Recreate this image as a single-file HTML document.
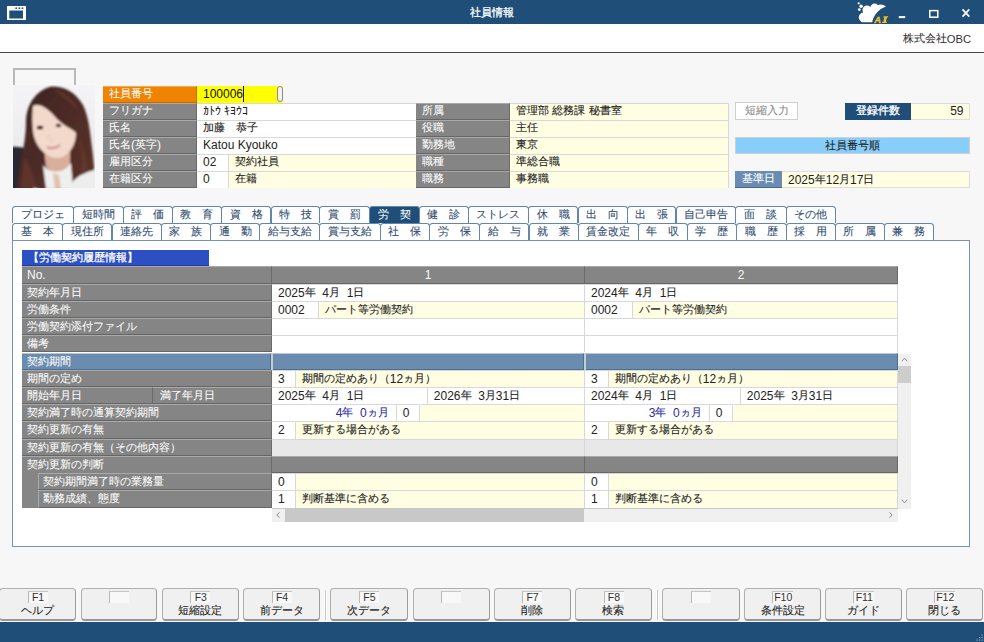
<!DOCTYPE html><html><head><meta charset="utf-8"><style>
*{box-sizing:border-box;margin:0;padding:0}
html,body{width:984px;height:642px;overflow:hidden}
body{position:relative;background:#f7f7f7;font-family:"Liberation Sans",sans-serif;font-size:12px;color:#222}
div{position:absolute;white-space:pre}
.lb{background:#858585;border-top:1px solid #a9a9a9;border-right:1px solid #6a6a6a;border-bottom:1.5px solid #666;color:#fafafa;padding-left:6px;line-height:17px}
.v{background:#fff;border-top:1px solid #d8d8d8;line-height:16.4px;padding-left:6px;color:#222}
.y{background:#fffee3}
.tab{background:#fff;border:1px solid #6386ad;border-bottom:none;border-radius:3.5px 3.5px 0 0;color:#2f4d72;font-size:11px;text-align:center;line-height:16.5px}
.j{font-size:11px;vertical-align:1.5px;line-height:1;-webkit-text-stroke:0.1px currentColor}
.b .j{-webkit-text-stroke:0.3px currentColor}
.fk{background:#f0f0f0;border:1px solid #b0b0b0;border-right-color:#9c9c9c;border-bottom:2px solid #979797;border-radius:4px}
</style></head><body>
<div style="left:0px;top:0px;width:984px;height:24px;background:#1f4e79"></div>
<svg style="position:absolute;left:0;top:0" width="984" height="24"><path fill="#fff" fill-rule="evenodd" d="M7,6H26V20H7Z M9.3,10.4V18.4H23V10.4Z"/><circle cx="16.2" cy="8.2" r="0.9" fill="#1f4e79"/><circle cx="19.4" cy="8.2" r="0.9" fill="#1f4e79"/><circle cx="22.5" cy="8.2" r="0.9" fill="#1f4e79"/><circle cx="858.7" cy="3.3" r="1.1" fill="#fff"/><circle cx="861.1" cy="6.2" r="1.7" fill="#fff"/><circle cx="859.3" cy="9.6" r="1.4" fill="#fff"/><g fill="#fff"><circle cx="863.6" cy="17.3" r="4.8"/><circle cx="867" cy="9.9" r="4.5"/><circle cx="874.6" cy="8" r="4.4"/><ellipse cx="881.6" cy="7.2" rx="4.4" ry="2.5" transform="rotate(12 881.6 7.2)"/><path d="M860,20L864,11L872,7L884,7.5L880,14L873,22.2H862Z"/></g><circle cx="892" cy="26" r="20.2" fill="#1f4e79"/><text x="874.2" y="23" font-family="Liberation Sans" font-weight="bold" font-style="italic" font-size="9.3" fill="#f2c01e" stroke="#f2c01e" stroke-width="0.35">A</text><path fill="#f2c01e" d="M883.6,16.3H888.2L887.9,17.6H886.9L885.9,21.7H886.9L886.6,23H882L882.3,21.7H883.3L884.3,17.6H883.3Z"/><rect x="898.8" y="16.1" width="6.4" height="2" fill="#fff"/><rect x="929.8" y="10.6" width="8" height="6.6" fill="none" stroke="#fff" stroke-width="1.5"/><path d="M962.5,9.3L969.3,16.6M969.3,9.3L962.5,16.6" stroke="#fff" stroke-width="1.7"/></svg>
<div class="b" style="left:0px;top:0px;width:984px;height:24px;color:#fff;text-align:center;line-height:26.8px;font-size:12px"><span class="j">社員情報</span></div>
<div style="left:0px;top:24px;width:984px;height:28px;background:#fff"></div>
<div style="left:880px;top:24px;width:91px;height:28px;text-align:right;line-height:31px;font-size:12px;color:#333"><span class="j">株式会社</span><span style="font-size:11.2px">OBC</span></div>
<div style="left:0px;top:52px;width:984px;height:1px;background:#4a4a4a"></div>
<div style="left:13px;top:68px;width:63px;height:18px;border:2px solid #b8b8b8;border-bottom:none"></div>
<svg style="position:absolute;left:13px;top:85px" width="82" height="103" viewBox="0 0 82 103"><defs><linearGradient id="bg" x1="0" y1="0" x2="0" y2="1"><stop offset="0" stop-color="#f4f4f6"/><stop offset="1" stop-color="#e6e6ea"/></linearGradient><linearGradient id="hair" x1="0" y1="0" x2="1" y2="1"><stop offset="0" stop-color="#3a2421"/><stop offset="0.5" stop-color="#4e2c26"/><stop offset="1" stop-color="#5a3229"/></linearGradient><filter id="bl" x="-10%" y="-10%" width="120%" height="120%"><feGaussianBlur stdDeviation="0.9"/></filter></defs><rect width="82" height="103" fill="url(#bg)"/><g filter="url(#bl)"><path fill="#2a2730" d="M-3,62C4,61 10,62 16,65L20,106H-3Z"/><path fill="url(#hair)" d="M38,1.5C50,1 62,6 70,20C75,30 77,45 78,55C80,70 82,85 82,106H28C24,100 10,104 4,106C5,95 7,80 9,68C12,58 13,45 13,35C14,20 22,6 38,1.5Z"/><path fill="#6a3a30" opacity="0.6" d="M12,72C17,82 20,92 24,103H8C9,92 10,82 12,72Z M66,52C72,64 76,80 74,100H67C69,82 69,68 66,52Z M40,4C52,6 60,14 66,26C58,18 50,12 40,4Z"/><path fill="#d9ae9a" d="M31,64C36,71 50,73 57,66L57,82C52,90 40,90 33,82Z"/><path fill="#efefef" d="M30,80C36,88 50,90 58,78L60,104H33Z"/><path fill="#e4c0ae" d="M40,88L46,90L48,104H42Z"/><path fill="#ededed" d="M60,96C66,90 74,87 84,84V106H56Z"/><path fill="#f3d9cb" d="M20,21C26,18 34,22 44,34C52,42 60,44 63,48C63,58 58,68 50,72C44,74 38,73 33,69C26,64 21,56 20,46C19,36 19,28 20,21Z"/></g><g filter="url(#bl)"><ellipse cx="27" cy="42.5" rx="3" ry="1.6" fill="#2e2226"/><ellipse cx="45.5" cy="40.5" rx="2.6" ry="1.4" fill="#4a3230"/><path d="M35,50C37,54 38,56 40,56" stroke="#dcb6a6" stroke-width="1" fill="none"/><path d="M34,62C38,64 44,63 47,60" stroke="#d49590" stroke-width="2.2" fill="none"/></g></svg>
<div class="lb" style="left:103px;top:85.5px;width:94px;height:17.13px;background:#f08300;border-top-color:#f5a850;border-right-color:#c86a00;border-bottom-color:#c86a00;line-height:15px"><span class="j">社員番号</span></div>
<div style="left:197px;top:85.5px;width:85.5px;height:17.13px;background:#ffff00;padding-left:6px;line-height:16.5px;color:#111">100006<span style="display:inline-block;width:1px;height:15.5px;background:#1010c0;vertical-align:-4px"></span></div>
<div style="left:277.3px;top:85.8px;width:5.5px;height:16.529999999999998px;background:#f4f4f4;border:1px solid #8a8a8a;border-radius:3px"></div>
<div class="lb" style="left:103px;top:102.63px;width:94px;height:17.13px;line-height:15px"><span class="j">フリガナ</span></div>
<div class="v" style="left:197px;top:102.63px;width:219px;height:17.13px;line-height:14.4px">ｶﾄｳ ｷﾖｳｺ</div>
<div class="lb" style="left:103px;top:119.76px;width:94px;height:17.13px;line-height:15px"><span class="j">氏名</span></div>
<div class="v" style="left:197px;top:119.76px;width:219px;height:17.13px;line-height:14.4px"><span class="j">加藤　恭子</span></div>
<div class="lb" style="left:103px;top:136.89px;width:94px;height:17.13px;line-height:15px"><span class="j">氏名</span>(<span class="j">英字</span>)</div>
<div class="v" style="left:197px;top:136.89px;width:219px;height:17.13px;line-height:14.4px">Katou Kyouko</div>
<div class="lb" style="left:103px;top:154.02px;width:94px;height:17.13px;line-height:15px"><span class="j">雇用区分</span></div>
<div class="v" style="left:197px;top:154.02px;width:31px;height:17.13px;line-height:14.4px">02</div>
<div class="v y" style="left:228px;top:154.02px;width:188px;height:17.13px;border-left:1px solid #d8d8d8;line-height:14.4px"><span class="j">契約社員</span></div>
<div class="lb" style="left:103px;top:171.15px;width:94px;height:17.13px;line-height:15px"><span class="j">在籍区分</span></div>
<div class="v" style="left:197px;top:171.15px;width:31px;height:17.13px;line-height:14.4px">0</div>
<div class="v y" style="left:228px;top:171.15px;width:188px;height:17.13px;border-left:1px solid #d8d8d8;line-height:14.4px"><span class="j">在籍</span></div>
<div class="lb" style="left:416px;top:102.63px;width:94px;height:17.13px;line-height:15px"><span class="j">所属</span></div>
<div class="v y" style="left:510px;top:102.63px;width:219px;height:17.13px;border-right:1px solid #d8d8d8;line-height:14.4px"><span class="j">管理部</span> <span class="j">総務課</span> <span class="j">秘書室</span></div>
<div class="lb" style="left:416px;top:119.76px;width:94px;height:17.13px;line-height:15px"><span class="j">役職</span></div>
<div class="v y" style="left:510px;top:119.76px;width:219px;height:17.13px;border-right:1px solid #d8d8d8;line-height:14.4px"><span class="j">主任</span></div>
<div class="lb" style="left:416px;top:136.89px;width:94px;height:17.13px;line-height:15px"><span class="j">勤務地</span></div>
<div class="v y" style="left:510px;top:136.89px;width:219px;height:17.13px;border-right:1px solid #d8d8d8;line-height:14.4px"><span class="j">東京</span></div>
<div class="lb" style="left:416px;top:154.02px;width:94px;height:17.13px;line-height:15px"><span class="j">職種</span></div>
<div class="v y" style="left:510px;top:154.02px;width:219px;height:17.13px;border-right:1px solid #d8d8d8;line-height:14.4px"><span class="j">準総合職</span></div>
<div class="lb" style="left:416px;top:171.15px;width:94px;height:17.13px;line-height:15px"><span class="j">職務</span></div>
<div class="v y" style="left:510px;top:171.15px;width:219px;height:17.13px;border-right:1px solid #d8d8d8;line-height:14.4px"><span class="j">事務職</span></div>
<div style="left:735px;top:102px;width:63px;height:18px;background:#fff;border:1px solid #cfcfcf;color:#8a8a8a;text-align:center;line-height:16px"><span class="j">短縮入力</span></div>
<div class="b" style="left:845px;top:102.5px;width:66px;height:17px;background:#1f4e79;color:#fff;text-align:center;line-height:17px"><span class="j">登録件数</span></div>
<div style="left:911px;top:102.5px;width:59px;height:17px;background:#fffee3;border:1px solid #dcdcdc;border-left:none;text-align:right;padding-right:5.5px;line-height:15px">59</div>
<div style="left:735px;top:137px;width:235px;height:17.3px;background:#87cefa;border:1px solid #d0d0d0;text-align:center;line-height:16px;color:#222"><span class="j">社員番号順</span></div>
<div style="left:735px;top:171.2px;width:47px;height:17px;background:#6a8cb2;border-bottom:1.5px solid #48698c;color:#fff;text-align:center;line-height:16px;padding-right:1px"><span class="j">基準日</span></div>
<div style="left:782px;top:171.2px;width:188px;height:17px;background:#fffee3;border:1px solid #dcdcdc;border-left:none;padding-left:6px;line-height:16px">2025<span class="j">年</span>12<span class="j">月</span>17<span class="j">日</span></div>
<div class="tab" style="left:12.3px;top:206px;width:61.7px;height:17px;"><span class="j">プロジェ</span></div>
<div class="tab" style="left:73px;top:206px;width:50.5px;height:17px;"><span class="j">短時間</span></div>
<div class="tab" style="left:122.5px;top:206px;width:50.4px;height:17px;"><span class="j">評　価</span></div>
<div class="tab" style="left:171.9px;top:206px;width:50.2px;height:17px;"><span class="j">教　育</span></div>
<div class="tab" style="left:221.1px;top:206px;width:50.4px;height:17px;"><span class="j">資　格</span></div>
<div class="tab" style="left:270.5px;top:206px;width:49.8px;height:17px;"><span class="j">特　技</span></div>
<div class="tab" style="left:319.3px;top:206px;width:50.8px;height:17px;"><span class="j">賞　罰</span></div>
<div class="tab" style="left:369.1px;top:206px;width:50.8px;height:17px;background:#1f4e79;color:#fff"><span class="j">労　契</span></div>
<div class="tab" style="left:418.9px;top:206px;width:49.7px;height:17px;"><span class="j">健　診</span></div>
<div class="tab" style="left:467.6px;top:206px;width:61.5px;height:17px;"><span class="j">ストレス</span></div>
<div class="tab" style="left:528.1px;top:206px;width:50.4px;height:17px;"><span class="j">休　職</span></div>
<div class="tab" style="left:577.5px;top:206px;width:50.1px;height:17px;"><span class="j">出　向</span></div>
<div class="tab" style="left:626.6px;top:206px;width:49.9px;height:17px;"><span class="j">出　張</span></div>
<div class="tab" style="left:675.5px;top:206px;width:60.9px;height:17px;"><span class="j">自己申告</span></div>
<div class="tab" style="left:735.4px;top:206px;width:51.2px;height:17px;"><span class="j">面　談</span></div>
<div class="tab" style="left:785.6px;top:206px;width:50.3px;height:17px;"><span class="j">その他</span></div>
<div class="tab" style="left:12.3px;top:223px;width:50.9px;height:17.5px;"><span class="j">基　本</span></div>
<div class="tab" style="left:62.2px;top:223px;width:50.3px;height:17.5px;"><span class="j">現住所</span></div>
<div class="tab" style="left:111.5px;top:223px;width:50.2px;height:17.5px;"><span class="j">連絡先</span></div>
<div class="tab" style="left:160.7px;top:223px;width:50.4px;height:17.5px;"><span class="j">家　族</span></div>
<div class="tab" style="left:210.1px;top:223px;width:50.2px;height:17.5px;"><span class="j">通　勤</span></div>
<div class="tab" style="left:259.3px;top:223px;width:61.0px;height:17.5px;"><span class="j">給与支給</span></div>
<div class="tab" style="left:319.3px;top:223px;width:61.4px;height:17.5px;"><span class="j">賞与支給</span></div>
<div class="tab" style="left:379.7px;top:223px;width:50.3px;height:17.5px;"><span class="j">社　保</span></div>
<div class="tab" style="left:429px;top:223px;width:50.6px;height:17.5px;"><span class="j">労　保</span></div>
<div class="tab" style="left:478.6px;top:223px;width:50.9px;height:17.5px;"><span class="j">給　与</span></div>
<div class="tab" style="left:528.5px;top:223px;width:50.0px;height:17.5px;"><span class="j">就　業</span></div>
<div class="tab" style="left:577.5px;top:223px;width:61.4px;height:17.5px;"><span class="j">賃金改定</span></div>
<div class="tab" style="left:637.9px;top:223px;width:49.8px;height:17.5px;"><span class="j">年　収</span></div>
<div class="tab" style="left:686.7px;top:223px;width:50.2px;height:17.5px;"><span class="j">学　歴</span></div>
<div class="tab" style="left:735.9px;top:223px;width:50.7px;height:17.5px;"><span class="j">職　歴</span></div>
<div class="tab" style="left:785.6px;top:223px;width:50.3px;height:17.5px;"><span class="j">採　用</span></div>
<div class="tab" style="left:834.9px;top:223px;width:49.8px;height:17.5px;"><span class="j">所　属</span></div>
<div class="tab" style="left:883.7px;top:223px;width:50.1px;height:17.5px;"><span class="j">兼　務</span></div>
<div style="left:12.4px;top:240px;width:957.6px;height:307px;background:#fff;border:1px solid #7393b8"></div>
<div class="b" style="left:22px;top:250px;width:187px;height:16.2px;background:#2c50c4;border-bottom:1.5px solid #1d3a9c;color:#fff;padding-left:5.5px;line-height:16.5px;"><span class="j">【労働契約履歴情報】</span></div>
<div class="lb" style="left:22px;top:266.3px;width:250px;height:17.24px;padding-left:5px">No.</div>
<div class="lb" style="left:22px;top:283.54px;width:250px;height:17.24px;padding-left:5px"><span class="j">契約年月日</span></div>
<div class="lb" style="left:22px;top:300.78px;width:250px;height:17.24px;padding-left:5px"><span class="j">労働条件</span></div>
<div class="lb" style="left:22px;top:318.02px;width:250px;height:17.24px;padding-left:5px"><span class="j">労働契約添付ファイル</span></div>
<div class="lb" style="left:22px;top:335.26px;width:250px;height:17.24px;padding-left:5px"><span class="j">備考</span></div>
<div style="left:22px;top:352.5px;width:876px;height:17.24px;background:#c4ccd4"></div>
<div class="lb" style="left:22px;top:352.5px;width:249.4px;height:17.24px;background:#6a8caf;border-top-color:#b8c4d0;border-right-color:#4f6f92;border-bottom:1.5px solid #4f6f92;padding-left:5px"><span class="j">契約期間</span></div>
<div style="left:272.6px;top:352.5px;width:311.8px;height:17.24px;background:#6a8caf;border-top:1px solid #b8c4d0;border-right:1px solid #4f6f92;border-bottom:1.5px solid #4f6f92"></div>
<div style="left:585.6px;top:352.5px;width:312.4px;height:17.24px;background:#6a8caf;border-top:1px solid #b8c4d0;border-right:1px solid #4f6f92;border-bottom:1.5px solid #4f6f92"></div>
<div class="lb" style="left:22px;top:369.74px;width:250px;height:17.24px;padding-left:5px"><span class="j">期間の定め</span></div>
<div class="lb" style="left:22px;top:386.98px;width:131.4px;height:17.24px;padding-left:5px"><span class="j">開始年月日</span></div>
<div class="lb" style="left:153.4px;top:386.98px;width:118.6px;height:17.24px;padding-left:7px"><span class="j">満了年月日</span></div>
<div class="lb" style="left:22px;top:404.22px;width:250px;height:17.24px;padding-left:5px"><span class="j">契約満了時の通算契約期間</span></div>
<div class="lb" style="left:22px;top:421.46px;width:250px;height:17.24px;padding-left:5px"><span class="j">契約更新の有無</span></div>
<div class="lb" style="left:22px;top:438.7px;width:250px;height:17.24px;padding-left:5px"><span class="j">契約更新の有無（その他内容）</span></div>
<div class="lb" style="left:22px;top:455.94px;width:250px;height:18.24px;border-bottom:none;padding-left:5px"><span class="j">契約更新の判断</span></div>
<div style="left:22px;top:473.18px;width:16px;height:17.24px;background:#858585;border-bottom:1px solid #858585"></div>
<div class="lb" style="left:37.7px;top:473.18px;width:234.3px;height:17.24px;border-left:1px solid #a9a9a9;padding-left:4px"><span class="j">契約期間満了時の業務量</span></div>
<div style="left:22px;top:490.42px;width:16px;height:17.24px;background:#858585;border-bottom:1px solid #858585"></div>
<div class="lb" style="left:37.7px;top:490.42px;width:234.3px;height:17.24px;border-left:1px solid #a9a9a9;padding-left:4px"><span class="j">勤務成績、態度</span></div>
<div class="lb" style="left:272px;top:266.3px;width:313px;height:17.24px;text-align:center;padding-left:0">1</div>
<div class="v" style="left:272px;top:283.54px;width:313px;height:17.24px;border-right:1px solid #d8d8d8">2025<span class="j">年</span>  4<span class="j">月</span>  1<span class="j">日</span></div>
<div class="v" style="left:272px;top:300.78px;width:46.5px;height:17.24px;border-right:1px solid #d8d8d8">0002</div>
<div class="v y" style="left:318.5px;top:300.78px;width:266.5px;height:17.24px;border-right:1px solid #d8d8d8"><span class="j">パート等労働契約</span></div>
<div class="v" style="left:272px;top:318.02px;width:313px;height:17.24px;border-right:1px solid #d8d8d8"></div>
<div class="v" style="left:272px;top:335.26px;width:313px;height:17.24px;border-right:1px solid #d8d8d8"></div>
<div class="v" style="left:272px;top:369.74px;width:23.8px;height:17.24px;border-right:1px solid #d8d8d8">3</div>
<div class="v y" style="left:295.8px;top:369.74px;width:289.2px;height:17.24px;border-right:1px solid #d8d8d8"><span class="j">期間の定めあり（</span>12<span class="j">ヵ月）</span></div>
<div class="v" style="left:272px;top:386.98px;width:155.8px;height:17.24px;border-right:1px solid #d8d8d8">2025<span class="j">年</span>  4<span class="j">月</span>  1<span class="j">日</span></div>
<div class="v" style="left:427.8px;top:386.98px;width:157.2px;height:17.24px;border-right:1px solid #d8d8d8">2026<span class="j">年</span>  3<span class="j">月</span>31<span class="j">日</span></div>
<div class="v" style="left:272px;top:404.22px;width:124.7px;height:17.24px;border-right:1px solid #d8d8d8;text-align:right;padding-right:7px;color:#2b2ba0">4<span class="j">年</span>  0<span class="j">ヵ月</span></div>
<div class="v" style="left:396.7px;top:404.22px;width:23.8px;height:17.24px;border-right:1px solid #d8d8d8">0</div>
<div class="v y" style="left:420.5px;top:404.22px;width:164.5px;height:17.24px;border-right:1px solid #d8d8d8"></div>
<div class="v" style="left:272px;top:421.46px;width:23.8px;height:17.24px;border-right:1px solid #d8d8d8">2</div>
<div class="v y" style="left:295.8px;top:421.46px;width:289.2px;height:17.24px;border-right:1px solid #d8d8d8"><span class="j">更新する場合がある</span></div>
<div class="v" style="left:272px;top:438.7px;width:313px;height:17.24px;background:#e8e8e8;border-right:1px solid #d8d8d8"></div>
<div class="lb" style="left:272px;top:455.94px;width:313px;height:17.24px;"></div>
<div class="v" style="left:272px;top:473.18px;width:23.8px;height:17.24px;border-right:1px solid #d8d8d8">0</div>
<div class="v y" style="left:295.8px;top:473.18px;width:289.2px;height:17.24px;border-right:1px solid #d8d8d8"></div>
<div class="v" style="left:272px;top:490.42px;width:23.8px;height:17.24px;border-right:1px solid #d8d8d8">1</div>
<div class="v y" style="left:295.8px;top:490.42px;width:289.2px;height:17.24px;border-right:1px solid #d8d8d8"><span class="j">判断基準に含める</span></div>
<div class="lb" style="left:585px;top:266.3px;width:313px;height:17.24px;text-align:center;padding-left:0">2</div>
<div class="v" style="left:585px;top:283.54px;width:313px;height:17.24px;border-right:1px solid #d8d8d8">2024<span class="j">年</span>  4<span class="j">月</span>  1<span class="j">日</span></div>
<div class="v" style="left:585px;top:300.78px;width:47.5px;height:17.24px;border-right:1px solid #d8d8d8">0002</div>
<div class="v y" style="left:632.5px;top:300.78px;width:265.5px;height:17.24px;border-right:1px solid #d8d8d8"><span class="j">パート等労働契約</span></div>
<div class="v" style="left:585px;top:318.02px;width:313px;height:17.24px;border-right:1px solid #d8d8d8"></div>
<div class="v" style="left:585px;top:335.26px;width:313px;height:17.24px;border-right:1px solid #d8d8d8"></div>
<div class="v" style="left:585px;top:369.74px;width:23.8px;height:17.24px;border-right:1px solid #d8d8d8">3</div>
<div class="v y" style="left:608.8px;top:369.74px;width:289.2px;height:17.24px;border-right:1px solid #d8d8d8"><span class="j">期間の定めあり（</span>12<span class="j">ヵ月）</span></div>
<div class="v" style="left:585px;top:386.98px;width:155.8px;height:17.24px;border-right:1px solid #d8d8d8">2024<span class="j">年</span>  4<span class="j">月</span>  1<span class="j">日</span></div>
<div class="v" style="left:740.8px;top:386.98px;width:157.2px;height:17.24px;border-right:1px solid #d8d8d8">2025<span class="j">年</span>  3<span class="j">月</span>31<span class="j">日</span></div>
<div class="v" style="left:585px;top:404.22px;width:124.7px;height:17.24px;border-right:1px solid #d8d8d8;text-align:right;padding-right:7px;color:#2b2ba0">3<span class="j">年</span>  0<span class="j">ヵ月</span></div>
<div class="v" style="left:709.7px;top:404.22px;width:23.8px;height:17.24px;border-right:1px solid #d8d8d8">0</div>
<div class="v y" style="left:733.5px;top:404.22px;width:164.5px;height:17.24px;border-right:1px solid #d8d8d8"></div>
<div class="v" style="left:585px;top:421.46px;width:23.8px;height:17.24px;border-right:1px solid #d8d8d8">2</div>
<div class="v y" style="left:608.8px;top:421.46px;width:289.2px;height:17.24px;border-right:1px solid #d8d8d8"><span class="j">更新する場合がある</span></div>
<div class="v" style="left:585px;top:438.7px;width:313px;height:17.24px;background:#e8e8e8;border-right:1px solid #d8d8d8"></div>
<div class="lb" style="left:585px;top:455.94px;width:313px;height:17.24px;"></div>
<div class="v" style="left:585px;top:473.18px;width:23.8px;height:17.24px;border-right:1px solid #d8d8d8">0</div>
<div class="v y" style="left:608.8px;top:473.18px;width:289.2px;height:17.24px;border-right:1px solid #d8d8d8"></div>
<div class="v" style="left:585px;top:490.42px;width:23.8px;height:17.24px;border-right:1px solid #d8d8d8">1</div>
<div class="v y" style="left:608.8px;top:490.42px;width:289.2px;height:17.24px;border-right:1px solid #d8d8d8"><span class="j">判断基準に含める</span></div>
<div style="left:898px;top:353.5px;width:13px;height:155px;background:#f0f0f0"></div>
<div style="left:898px;top:366px;width:13px;height:16.5px;background:#cdcdcd"></div>
<div style="left:272px;top:507.5px;width:626px;height:1.2px;background:#c8c8c8"></div>
<div style="left:272px;top:508.7px;width:626px;height:12.9px;background:#f0f0f0"></div>
<div style="left:284.7px;top:508.7px;width:299.5px;height:12.9px;background:#c8c8c8"></div>
<svg style="position:absolute;left:0;top:0" width="984" height="642"><g fill="none" stroke="#8c8c8c" stroke-width="1"><path d="M901.8,361.2L904.5,358.2L907.2,361.2"/><path d="M901.8,499.8L904.5,502.8L907.2,499.8"/><path d="M279.6,512.3L276.8,515L279.6,517.7"/><path d="M889.4,512.3L892.2,515L889.4,517.7"/></g></svg>
<div style="left:0px;top:622px;width:984px;height:20px;background:#1f4e79"></div>
<div class="fk" style="left:-1px;top:588.3px;width:77.3px;height:33px;"></div>
<div style="left:27.6px;top:591px;width:20px;height:12px;border-top:1px solid #c4c4c4;border-left:1px solid #b8b8b8;background:#f8f8f8;font-size:10.5px;line-height:11.5px;text-align:center;color:#333">F1</div>
<div style="left:-1px;top:603px;width:77.3px;height:16px;text-align:center;font-size:12px;line-height:16px;color:#222"><span class="j">ヘルプ</span></div>
<div class="fk" style="left:80.7px;top:588.3px;width:76.8px;height:33px;"></div>
<div style="left:109.1px;top:591px;width:20px;height:12px;border-top:1px solid #c4c4c4;border-left:1px solid #b8b8b8;background:#f8f8f8;font-size:10.5px;line-height:11.5px;text-align:center;color:#333"></div>
<div style="left:80.7px;top:603px;width:76.8px;height:16px;text-align:center;font-size:12px;line-height:16px;color:#222"></div>
<div class="fk" style="left:161.7px;top:588.3px;width:77.3px;height:33px;"></div>
<div style="left:190.3px;top:591px;width:20px;height:12px;border-top:1px solid #c4c4c4;border-left:1px solid #b8b8b8;background:#f8f8f8;font-size:10.5px;line-height:11.5px;text-align:center;color:#333">F3</div>
<div style="left:161.7px;top:603px;width:77.3px;height:16px;text-align:center;font-size:12px;line-height:16px;color:#222"><span class="j">短縮設定</span></div>
<div class="fk" style="left:243.2px;top:588.3px;width:76.9px;height:33px;"></div>
<div style="left:271.6px;top:591px;width:20px;height:12px;border-top:1px solid #c4c4c4;border-left:1px solid #b8b8b8;background:#f8f8f8;font-size:10.5px;line-height:11.5px;text-align:center;color:#333">F4</div>
<div style="left:243.2px;top:603px;width:76.9px;height:16px;text-align:center;font-size:12px;line-height:16px;color:#222"><span class="j">前データ</span></div>
<div class="fk" style="left:330.4px;top:588.3px;width:77.2px;height:33px;"></div>
<div style="left:359.0px;top:591px;width:20px;height:12px;border-top:1px solid #c4c4c4;border-left:1px solid #b8b8b8;background:#f8f8f8;font-size:10.5px;line-height:11.5px;text-align:center;color:#333">F5</div>
<div style="left:330.4px;top:603px;width:77.2px;height:16px;text-align:center;font-size:12px;line-height:16px;color:#222"><span class="j">次データ</span></div>
<div class="fk" style="left:412.6px;top:588.3px;width:77.3px;height:33px;"></div>
<div style="left:441.2px;top:591px;width:20px;height:12px;border-top:1px solid #c4c4c4;border-left:1px solid #b8b8b8;background:#f8f8f8;font-size:10.5px;line-height:11.5px;text-align:center;color:#333"></div>
<div style="left:412.6px;top:603px;width:77.3px;height:16px;text-align:center;font-size:12px;line-height:16px;color:#222"></div>
<div class="fk" style="left:493.5px;top:588.3px;width:77.2px;height:33px;"></div>
<div style="left:522.1px;top:591px;width:20px;height:12px;border-top:1px solid #c4c4c4;border-left:1px solid #b8b8b8;background:#f8f8f8;font-size:10.5px;line-height:11.5px;text-align:center;color:#333">F7</div>
<div style="left:493.5px;top:603px;width:77.2px;height:16px;text-align:center;font-size:12px;line-height:16px;color:#222"><span class="j">削除</span></div>
<div class="fk" style="left:575px;top:588.3px;width:76.9px;height:33px;"></div>
<div style="left:603.5px;top:591px;width:20px;height:12px;border-top:1px solid #c4c4c4;border-left:1px solid #b8b8b8;background:#f8f8f8;font-size:10.5px;line-height:11.5px;text-align:center;color:#333">F8</div>
<div style="left:575px;top:603px;width:76.9px;height:16px;text-align:center;font-size:12px;line-height:16px;color:#222"><span class="j">検索</span></div>
<div class="fk" style="left:661.9px;top:588.3px;width:77.9px;height:33px;"></div>
<div style="left:690.9px;top:591px;width:20px;height:12px;border-top:1px solid #c4c4c4;border-left:1px solid #b8b8b8;background:#f8f8f8;font-size:10.5px;line-height:11.5px;text-align:center;color:#333"></div>
<div style="left:661.9px;top:603px;width:77.9px;height:16px;text-align:center;font-size:12px;line-height:16px;color:#222"></div>
<div class="fk" style="left:744.2px;top:588.3px;width:76.9px;height:33px;"></div>
<div style="left:772.2px;top:591px;width:21px;height:12px;border-top:1px solid #c4c4c4;border-left:1px solid #b8b8b8;background:#f8f8f8;font-size:10.5px;line-height:11.5px;text-align:center;color:#333">F10</div>
<div style="left:744.2px;top:603px;width:76.9px;height:16px;text-align:center;font-size:12px;line-height:16px;color:#222"><span class="j">条件設定</span></div>
<div class="fk" style="left:825.1px;top:588.3px;width:77.4px;height:33px;"></div>
<div style="left:853.3px;top:591px;width:21px;height:12px;border-top:1px solid #c4c4c4;border-left:1px solid #b8b8b8;background:#f8f8f8;font-size:10.5px;line-height:11.5px;text-align:center;color:#333">F11</div>
<div style="left:825.1px;top:603px;width:77.4px;height:16px;text-align:center;font-size:12px;line-height:16px;color:#222"><span class="j">ガイド</span></div>
<div class="fk" style="left:906.3px;top:588.3px;width:76.9px;height:33px;"></div>
<div style="left:934.2px;top:591px;width:21px;height:12px;border-top:1px solid #c4c4c4;border-left:1px solid #b8b8b8;background:#f8f8f8;font-size:10.5px;line-height:11.5px;text-align:center;color:#333">F12</div>
<div style="left:906.3px;top:603px;width:76.9px;height:16px;text-align:center;font-size:12px;line-height:16px;color:#222"><span class="j">閉じる</span></div>
<div style="left:324.4px;top:590px;width:3px;height:29.5px;background:#c4c4c4;border-left:1px solid #fff;border-right:1px solid #fff"></div>
<div style="left:655.9px;top:590px;width:3px;height:29.5px;background:#c4c4c4;border-left:1px solid #fff;border-right:1px solid #fff"></div>
<svg style="position:absolute;left:970px;top:630px" width="14" height="12"><g fill="#8eacc8"><rect x="11.5" y="4.5" width="1.2" height="1.2"/><rect x="9" y="7" width="1.2" height="1.2"/><rect x="11.5" y="7" width="1.2" height="1.2"/><rect x="6.5" y="9.5" width="1.2" height="1.2"/><rect x="9" y="9.5" width="1.2" height="1.2"/><rect x="11.5" y="9.5" width="1.2" height="1.2"/></g></svg>
</body></html>
